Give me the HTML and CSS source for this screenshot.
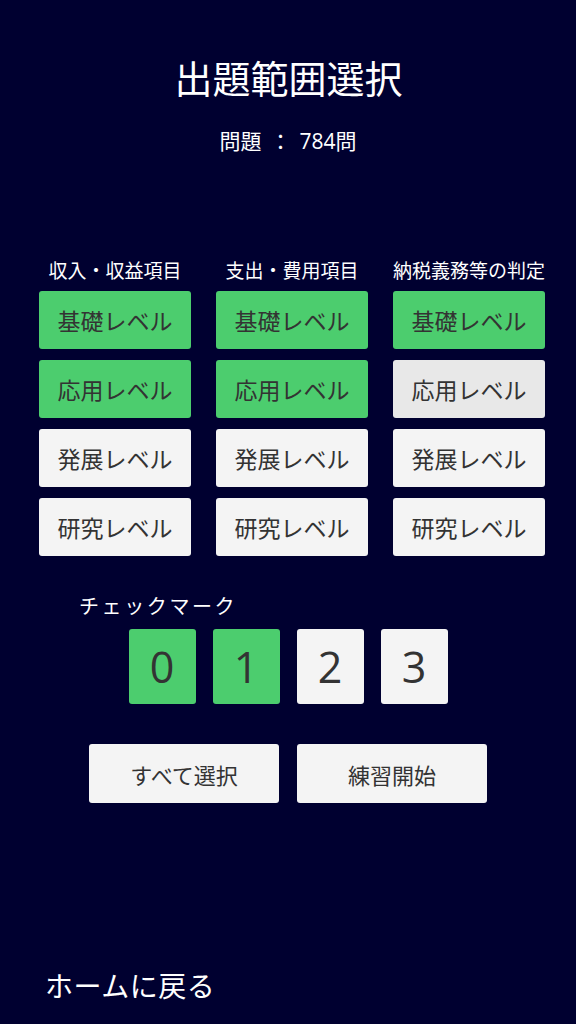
FILE: index.html
```html
<!DOCTYPE html>
<html lang="ja">
<head>
<meta charset="utf-8">
<link rel="stylesheet" href="styles.css">
</head>
<body>
<div class="page">
  <h1 class="title">出題範囲選択</h1>
  <div class="count">問題 ： 784問</div>
  <div class="grid">
    <div class="col">
      <div class="head">収入・収益項目</div>
      <div class="btn on">基礎レベル</div>
      <div class="btn on">応用レベル</div>
      <div class="btn">発展レベル</div>
      <div class="btn">研究レベル</div>
    </div>
    <div class="col">
      <div class="head">支出・費用項目</div>
      <div class="btn on">基礎レベル</div>
      <div class="btn on">応用レベル</div>
      <div class="btn">発展レベル</div>
      <div class="btn">研究レベル</div>
    </div>
    <div class="col">
      <div class="head">納税義務等の判定</div>
      <div class="btn on">基礎レベル</div>
      <div class="btn hover">応用レベル</div>
      <div class="btn">発展レベル</div>
      <div class="btn">研究レベル</div>
    </div>
  </div>
  <div class="check-label">チェックマーク</div>
  <div class="nums">
    <div class="num on">0</div>
    <div class="num on">1</div>
    <div class="num">2</div>
    <div class="num">3</div>
  </div>
  <div class="actions">
    <div class="act">すべて選択</div>
    <div class="act">練習開始</div>
  </div>
  <div class="home">ホームに戻る</div>
</div>
</body>
</html>
```
FILE: styles.css
```css
html, body {
  margin: 0;
  padding: 0;
  background: #000030;
}
body {
  font-family: "Open Sans", "Noto Sans CJK JP", sans-serif;
  color: #ffffff;
}
.page {
  width: 576px;
  height: 1024px;
  display: flex;
  flex-direction: column;
  padding-top: 56px;
  box-sizing: border-box;
}
.title {
  margin: 0;
  font-size: 38px;
  line-height: 44px;
  font-weight: 400;
  text-align: center;
  padding-left: 1px;
}
.count {
  margin-top: 27px;
  font-size: 21px;
  line-height: 28px;
  text-align: center;
  font-weight: 400;
  word-spacing: 3px;
}
.grid {
  margin-top: 104px;
  padding-left: 39px;
  display: flex;
  gap: 25px;
}
.col {
  width: 152px;
  display: flex;
  flex-direction: column;
  gap: 11px;
}
.head {
  font-size: 19px;
  line-height: 24px;
  text-align: center;
  font-weight: 400;
  white-space: nowrap;
  margin-bottom: -3px;
}
.btn {
  height: 58px;
  border-radius: 3px;
  background: #f4f4f4;
  color: #333333;
  font-size: 23px;
  display: flex;
  align-items: center;
  justify-content: center;
}
.btn.on {
  background: #4ccd6e;
}
.btn.hover {
  background: #e8e8e8;
}
.check-label {
  margin-top: 38px;
  padding-left: 79px;
  font-size: 20px;
  line-height: 26px;
  letter-spacing: 2.6px;
  font-weight: 400;
}
.nums {
  margin-top: 9px;
  display: flex;
  justify-content: center;
  gap: 17px;
}
.num {
  width: 67px;
  height: 75px;
  border-radius: 3px;
  background: #f4f4f4;
  color: #333333;
  font-size: 43px;
  display: flex;
  align-items: center;
  justify-content: center;
}
.num.on {
  background: #4ccd6e;
}
.actions {
  margin-top: 40px;
  display: flex;
  justify-content: center;
  gap: 18px;
}
.act {
  width: 190px;
  height: 59px;
  border-radius: 3px;
  background: #f4f4f4;
  color: #333333;
  font-size: 22px;
  display: flex;
  align-items: center;
  justify-content: center;
}
.home {
  margin-top: auto;
  margin-bottom: 18px;
  padding-left: 45px;
  font-size: 28px;
  line-height: 40px;
  font-weight: 400;
  letter-spacing: 0.5px;
}
```
